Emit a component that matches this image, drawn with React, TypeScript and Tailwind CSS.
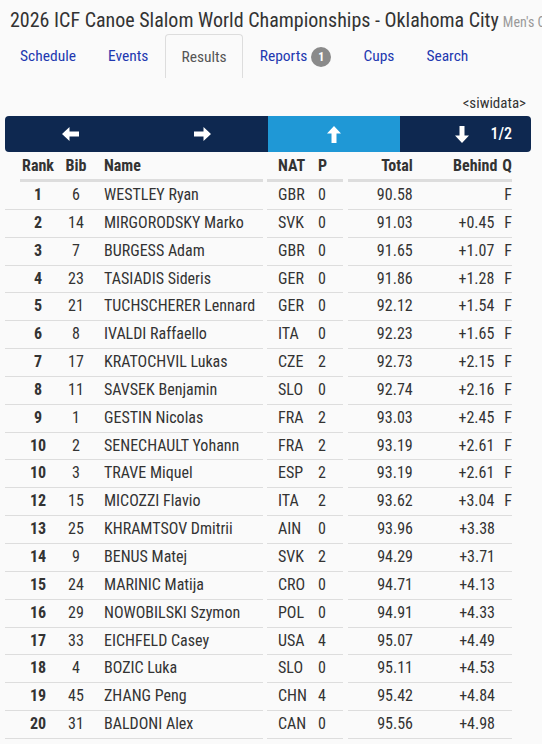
import React from 'react';

const rows: [string, string, string, string, string, string, string, string][] = [
  ['1', '6', 'WESTLEY Ryan', 'GBR', '0', '90.58', '', 'F'],
  ['2', '14', 'MIRGORODSKY Marko', 'SVK', '0', '91.03', '+0.45', 'F'],
  ['3', '7', 'BURGESS Adam', 'GBR', '0', '91.65', '+1.07', 'F'],
  ['4', '23', 'TASIADIS Sideris', 'GER', '0', '91.86', '+1.28', 'F'],
  ['5', '21', 'TUCHSCHERER Lennard', 'GER', '0', '92.12', '+1.54', 'F'],
  ['6', '8', 'IVALDI Raffaello', 'ITA', '0', '92.23', '+1.65', 'F'],
  ['7', '17', 'KRATOCHVIL Lukas', 'CZE', '2', '92.73', '+2.15', 'F'],
  ['8', '11', 'SAVSEK Benjamin', 'SLO', '0', '92.74', '+2.16', 'F'],
  ['9', '1', 'GESTIN Nicolas', 'FRA', '2', '93.03', '+2.45', 'F'],
  ['10', '2', 'SENECHAULT Yohann', 'FRA', '2', '93.19', '+2.61', 'F'],
  ['10', '3', 'TRAVE Miquel', 'ESP', '2', '93.19', '+2.61', 'F'],
  ['12', '15', 'MICOZZI Flavio', 'ITA', '2', '93.62', '+3.04', 'F'],
  ['13', '25', 'KHRAMTSOV Dmitrii', 'AIN', '0', '93.96', '+3.38', ''],
  ['14', '9', 'BENUS Matej', 'SVK', '2', '94.29', '+3.71', ''],
  ['15', '24', 'MARINIC Matija', 'CRO', '0', '94.71', '+4.13', ''],
  ['16', '29', 'NOWOBILSKI Szymon', 'POL', '0', '94.91', '+4.33', ''],
  ['17', '33', 'EICHFELD Casey', 'USA', '4', '95.07', '+4.49', ''],
  ['18', '4', 'BOZIC Luka', 'SLO', '0', '95.11', '+4.53', ''],
  ['19', '45', 'ZHANG Peng', 'CHN', '4', '95.42', '+4.84', ''],
  ['20', '31', 'BALDONI Alex', 'CAN', '0', '95.56', '+4.98', ''],
];

const font = "font-['Roboto_Condensed','Liberation_Sans_Narrow','DejaVu_Sans_Condensed',Roboto,sans-serif]";

const ArrowLeft = () => (
  <svg width="17" height="14" viewBox="0 0 17 14"><polygon points="0,7 7.5,0 7.5,4.5 17,4.5 17,9.5 7.5,9.5 7.5,14" fill="white" /></svg>
);
const ArrowRight = () => (
  <svg width="17" height="14" viewBox="0 0 17 14"><polygon points="17,7 9.5,0 9.5,4.5 0,4.5 0,9.5 9.5,9.5 9.5,14" fill="white" /></svg>
);
const ArrowUp = () => (
  <svg width="14" height="17" viewBox="0 0 14 17"><polygon points="7,0 0,7.5 4.5,7.5 4.5,17 9.5,17 9.5,7.5 14,7.5" fill="white" /></svg>
);
const ArrowDown = () => (
  <svg width="14" height="17" viewBox="0 0 14 17"><polygon points="7,17 0,9.5 4.5,9.5 4.5,0 9.5,0 9.5,9.5 14,9.5" fill="white" /></svg>
);

const tabs = ['Schedule', 'Events', 'Results', 'Reports', 'Cups', 'Search'];

export default function App() {
  return (
    <div className={`w-[542px] h-[744px] overflow-hidden bg-[#fafafa] text-[#333] ${font}`}>
      <div className="pl-[10px] pt-[7px] whitespace-nowrap h-[30px] leading-[26px]">
        <span className="text-[20px]">2026 ICF Canoe Slalom World Championships - Oklahoma City</span>
        <span className="text-[14px] text-[#999] ml-[4px]">Men's C1</span>
      </div>
      <div className="flex gap-[2px] pl-[5px] pt-[4px] h-[48px]">
        {tabs.map((t) =>
          t === 'Results' ? (
            <div key={t} className="px-[15px] pt-[2px] flex items-center border border-b-0 border-[#ddd] rounded-t-[4px] text-[15.5px] text-[#555] bg-[#fafafa]">{t}</div>
          ) : (
            <div key={t} className="px-[15px] pt-[2px] flex items-center text-[15.5px] text-[#2238b0]">
              {t}
              {t === 'Reports' && (
                <span className="ml-[4px] w-[20px] h-[20px] rounded-full bg-[#8a8a8a] text-white text-[12px] font-bold flex items-center justify-center">1</span>
              )}
            </div>
          )
        )}
      </div>
      <div className="text-right pr-[16px] pt-[16px] text-[15px] leading-[18px]">&lt;siwidata&gt;</div>
      <div className="ml-[5px] mr-[11px] mt-[4px] h-[36px] rounded-[4px] bg-[#0e2850] grid grid-cols-4 overflow-hidden">
        <div className="flex items-center justify-center"><ArrowLeft /></div>
        <div className="flex items-center justify-center"><ArrowRight /></div>
        <div className="flex items-center justify-center bg-[#1f98d6]"><ArrowUp /></div>
        <div className="flex items-center pl-[55px] gap-[22px] text-white text-[16px] font-medium">
          <ArrowDown />
          <span>1/2</span>
        </div>
      </div>
      <div className="flex h-[30px] items-end font-bold text-[16px] leading-[27px]">
        <div className="ml-[20px] w-[243px] flex border-b-[3px] border-[#ddd]">
          <div className="w-[46px] text-center -ml-[5px]">Rank</div>
          <div className="w-[30px] text-center">Bib</div>
          <div className="pl-[13px]">Name</div>
        </div>
        <div className="ml-[4px] w-[76px] flex border-b-[3px] border-[#ddd]">
          <div className="w-[40px] pl-[11px]">NAT</div>
          <div className="pl-[11px]">P</div>
        </div>
        <div className="ml-[5px] w-[164px] flex border-b-[3px] border-[#ddd]">
          <div className="w-[72px] text-right pr-[7px]">Total</div>
          <div className="w-[80px] text-right pr-[2px]">Behind</div>
          <div className="pl-[3px]">Q</div>
        </div>
      </div>
      {rows.map((r, i) => (
        <div key={i} className="flex h-[27.85px] text-[16px] leading-[26.85px]">
          <div className="ml-[5px] w-[258px] flex border-b border-[#ddd]">
            <div className="ml-[10px] w-[46px] text-center font-bold">{r[0]}</div>
            <div className="w-[30px] text-center">{r[1]}</div>
            <div className="pl-[13px] whitespace-nowrap">{r[2]}</div>
          </div>
          <div className="ml-[4px] w-[76px] flex border-b border-[#ddd]">
            <div className="w-[40px] pl-[11px]">{r[3]}</div>
            <div className="pl-[11px]">{r[4]}</div>
          </div>
          <div className="ml-[5px] w-[164px] flex border-b border-[#ddd]">
            <div className="w-[72px] text-right pr-[7px]">{r[5]}</div>
            <div className="w-[80px] text-right pr-[5px]">{r[6]}</div>
            <div className="pl-[5px]">{r[7]}</div>
          </div>
        </div>
      ))}
    </div>
  );
}
